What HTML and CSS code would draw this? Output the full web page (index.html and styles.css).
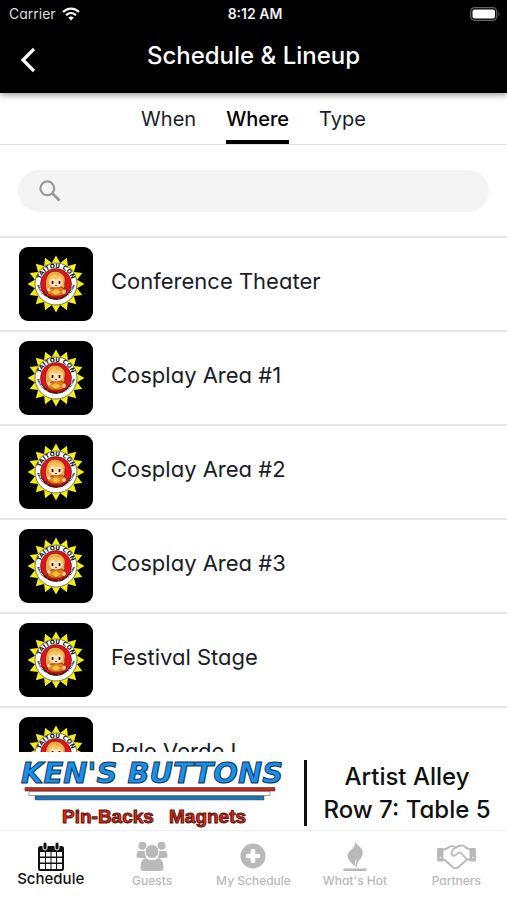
FILE: index.html
```html
<!DOCTYPE html>
<html lang="en">
<head>
    <meta charset="UTF-8">
    <meta name="viewport" content="width=device-width, initial-scale=1.0">
    <title>Schedule &amp; Lineup</title>
    <link rel="stylesheet" href="styles.css">
</head>
<body>
<!-- shared venue logo -->
<svg class="sprite" aria-hidden="true">
    <defs>
        <path id="rays" d="M0 0L28.500 0L21.100 4.200L26.300 10.900L17.900 11.900L20.200 20.200L11.900 17.900L10.900 26.300L4.200 21.100L0 28.500Z"/>
        <path id="arc-top" d="M-16.200 0A16.200 16.200 0 0 1 16.200 0"/>
        <path id="arc-bottom" d="M-19.500 -2A19.600 19.600 0 0 0 19.500 -2"/>
        <symbol id="logo" viewBox="-37 -37 74 74">
            <rect x="-37" y="-37" width="74" height="74" fill="#000"/>
            <g fill="#f5ee12">
                <use href="#rays"/>
                <use href="#rays" transform="rotate(90)"/>
                <use href="#rays" transform="rotate(180)"/>
                <use href="#rays" transform="rotate(270)"/>
            </g>
            <circle r="21" fill="#fff" stroke="#222" stroke-width=".6"/>
            <circle r="15.500" fill="#e8101c" stroke="#222" stroke-width=".6"/>
            <text class="logo-name"><textPath href="#arc-top" startOffset="50%">TAITOU CON</textPath></text>
            <text class="logo-tag"><textPath href="#arc-bottom" startOffset="50%">ARIZONA ANIME CONVENTION</textPath></text>
            <path d="M-9 7C-12 3-11-9-5-12C0-14 7-12 9-6C10-3 8-1 9 3L5 7Z" fill="#eda944" stroke="#5b2509" stroke-width=".7"/>
            <path d="M-5 4L5 3L11 6L9 10L4 12L-4 12L-9 9Z" fill="#e77817" stroke="#5b2509" stroke-width=".7"/>
            <ellipse cx="0" cy="-2" rx="7" ry="5.500" fill="#ffe2bd"/>
            <path d="M-8-3C-6-10 0-11 1-8C4-10 8-7 7-2L3-6L0-4L-3-6Z" fill="#f6c65c"/>
            <path d="M-3.500-3v3M3.500-3v3" stroke="#38180c" stroke-width="1.800"/>
            <path d="M-1 1.500h2" stroke="#b3301d" stroke-width="1"/>
            <path d="M-5 8L0 5L5 8L0 11Z" fill="#f4c23b"/>
            <circle cx="-7" cy="6" r="1.800" fill="#ffe2bd"/>
            <circle cx="8" cy="8" r="1.800" fill="#ffe2bd"/>
        </symbol>
    </defs>
</svg>

<header class="header">
    <div class="status">
        <div class="carrier">
            <span>Carrier</span>
            <svg width="18" height="14" viewBox="0 0 18 14" fill="none" stroke="#fff" stroke-width="2.200">
                <path d="M1 5C5.500.4 12.500.4 17 5"/>
                <path d="M4 8.200C7 5.400 11 5.400 14 8.200"/>
                <path d="M9 13.500L6.200 10.600Q9 8.600 11.800 10.600Z" fill="#fff" stroke="none"/>
            </svg>
        </div>
        <span class="time">8:12 AM</span>
        <svg class="battery" width="31" height="14" viewBox="0 0 31 14">
            <rect x=".7" y=".7" width="26" height="12.600" rx="4" fill="none" stroke="#666" stroke-width="1.200"/>
            <rect x="2.500" y="2.500" width="22.500" height="9" rx="2" fill="#fff"/>
            <path d="M28.500 4.500Q30.500 7 28.500 9.500Z" fill="#666"/>
        </svg>
    </div>
    <div class="title-bar">
        <button class="back" aria-label="Back">
            <svg width="16" height="26" viewBox="0 0 16 26" fill="none" stroke="#fff" stroke-width="3.200">
                <path d="M14 2L3 13L14 24"/>
            </svg>
        </button>
        <h1>Schedule &amp; Lineup</h1>
    </div>
</header>

<nav class="tabs">
    <a href="#when">When</a>
    <a href="#where" class="active">Where</a>
    <a href="#type">Type</a>
</nav>

<main class="content">
    <form class="search">
        <label class="search-box">
            <svg width="22" height="22" viewBox="0 0 22 22" fill="none" stroke="#999" stroke-width="2.200">
                <circle cx="8.300" cy="8.300" r="6.900"/>
                <path d="M13 13L20.500 20.500" stroke-width="2.800"/>
            </svg>
            <input type="search" aria-label="Search">
        </label>
    </form>
    <ul class="places">
        <li><a href="#"><svg class="thumb"><use href="#logo"/></svg><span>Conference Theater</span></a></li>
        <li><a href="#"><svg class="thumb"><use href="#logo"/></svg><span>Cosplay Area #1</span></a></li>
        <li><a href="#"><svg class="thumb"><use href="#logo"/></svg><span>Cosplay Area #2</span></a></li>
        <li><a href="#"><svg class="thumb"><use href="#logo"/></svg><span>Cosplay Area #3</span></a></li>
        <li><a href="#"><svg class="thumb"><use href="#logo"/></svg><span>Festival Stage</span></a></li>
        <li><a href="#"><svg class="thumb"><use href="#logo"/></svg><span>Palo Verde I</span></a></li>
    </ul>
</main>

<a class="banner" href="#">
    <svg class="banner-logo" width="270" height="72" viewBox="0 0 270 72">
        <text class="brand" x="1" y="26">KEN'S BUTTONS</text>
        <path d="M5 30.500H255V34H5Z" fill="#c9271b" stroke="#333" stroke-width=".6"/>
        <path d="M9 34.500H250V38.500H9Z" fill="#fff" stroke="#555" stroke-width=".6"/>
        <path d="M15 39H244V43H15Z" fill="#1976b8" stroke="#333" stroke-width=".4"/>
        <text class="goods" x="42" y="66">Pin-Backs</text>
        <text class="goods" x="149" y="66">Magnets</text>
    </svg>
    <p class="banner-place">Artist Alley<br>Row 7: Table 5</p>
</a>

<nav class="bottom-nav">
    <a href="#" class="active">
        <svg width="28" height="30" viewBox="0 0 28 30">
            <rect x="1" y="5" width="26" height="25" rx="2.500" fill="#111"/>
            <path d="M3 11h5v4.500H3zM9 11h4.500v4.500H9zM14.500 11H19v4.500h-4.500zM20 11h5v4.500h-5zM3 17h5v4.500H3zM9 17h4.500v4.500H9zM14.500 17H19v4.500h-4.500zM20 17h5v4.500h-5zM3 23h5v5H3zM9 23h4.500v5H9zM14.500 23H19v5h-4.500zM20 23h5v5h-5z" fill="#fff"/>
            <rect x="6" y="1" width="4" height="8" rx="2" fill="#111" stroke="#fff"/>
            <rect x="18" y="1" width="4" height="8" rx="2" fill="#111" stroke="#fff"/>
        </svg>
        <span>Schedule</span>
    </a>
    <a href="#">
        <svg width="32" height="30" viewBox="0 0 32 30" fill="#b9b9b9">
            <circle cx="6.500" cy="4.800" r="4"/>
            <circle cx="25.500" cy="4.800" r="4"/>
            <path d="M2 9.500Q5 10.500 9 9.500L10 17H3Q0 17 .5 14ZM30 9.500Q27 10.500 23 9.500L22 17H29Q32 17 31.500 14Z"/>
            <circle cx="16" cy="10.500" r="7" stroke="#fff"/>
            <path d="M9 17Q16 21 23 17Q27.500 19 27.500 27Q27.500 30 24 30H8Q4.500 30 4.500 27Q4.500 19 9 17Z"/>
        </svg>
        <span>Guests</span>
    </a>
    <a href="#">
        <svg width="28" height="30" viewBox="0 0 28 30">
            <circle cx="14" cy="15" r="12.500" fill="#b9b9b9"/>
            <path d="M14 10V20M9 15H19" stroke="#fff" stroke-width="4.500" stroke-linecap="round"/>
        </svg>
        <span>My Schedule</span>
    </a>
    <a href="#">
        <svg width="24" height="30" viewBox="0 0 24 30" fill="#b9b9b9">
            <path d="M12 0Q13 3 17 6Q22 11 17.500 18Q14 21 13.500 26Q4 20 4.500 14Q5 11 9 8Q13 4 12 0Z"/>
            <path d="M12 25Q11 21 14 17.500Q13 22 12 25Z" fill="#fff"/>
            <path d="M.5 27.500h23V30H.5z"/>
        </svg>
        <span>What's Hot</span>
    </a>
    <a href="#">
        <svg width="40" height="30" viewBox="0 0 40 30" fill="none" stroke="#b9b9b9" stroke-width="1.800" stroke-linejoin="round" stroke-linecap="round">
            <path d="M2 8H6.500V19.500H2ZM34.500 8H39V19.500H34.500Z" fill="#b9b9b9"/>
            <path d="M7 8.500Q10 8.500 13 6Q16 4 20 6.500Q24 3.500 28 5Q31 8 34 8.500"/>
            <path d="M7 19H9L16.500 26Q19.500 28.500 22.500 26L31 18.500H34"/>
            <path d="M20 6.500Q15 9 15.500 13Q17.500 17 22 12Q24 10.500 25.500 12.500L31 18.500"/>
            <path d="M4.300 16.500h.2M36.700 16.500h.2" stroke="#fff" stroke-width="1.500"/>
        </svg>
        <span>Partners</span>
    </a>
</nav>
</body>
</html>
```

FILE: styles.css
```css
* {
    box-sizing: border-box;
}
body {
    font-family: Inter, "Liberation Sans", sans-serif;
    /* round, single-storey a */
    font-feature-settings: "cv11";
    background-color: #fff;
    color: #1a1c28;
    margin: 0;
    display: flex;
    flex-direction: column;
    height: 100vh;
}
a {
    color: inherit;
    text-decoration: none;
}
svg {
    display: block;
    flex-shrink: 0;
}
.sprite {
    position: absolute;
    width: 0;
    height: 0;
}
.header {
    background-color: #000;
    color: #fff;
    box-shadow: 0 2px 6px rgba(0,0,0,0.4);
    z-index: 1;
}
.status {
    display: grid;
    grid-template-columns: 1fr auto 1fr;
    align-items: center;
    height: 27px;
    padding: 0 6px 0 9px;
    font-size: 14px;
}
.carrier {
    display: flex;
    align-items: center;
    gap: 6px;
    color: #ddd;
}
.time {
    font-weight: 600;
    color: #eee;
}
.battery {
    justify-self: end;
}
.title-bar {
    display: grid;
    grid-template-columns: 48px 1fr 48px;
    align-items: center;
    height: 66px;
    padding-bottom: 8px;
}
.back {
    background: none;
    border: none;
    padding: 8px 0 0 20px;
    cursor: pointer;
}
.title-bar h1 {
    margin: 0;
    font-size: 24px;
    line-height: 28px;
    font-weight: 500;
    text-align: center;
}
.tabs {
    display: flex;
    justify-content: center;
    gap: 30px;
    height: 52px;
    border-bottom: 1px solid #ddd;
    font-size: 20px;
    line-height: 52px;
}
.tabs a {
    height: 51px;
}
.tabs .active {
    color: #000;
    font-weight: 500;
    border-bottom: 4px solid #000;
}
.content {
    flex: 1;
    min-height: 0;
    overflow-y: auto;
    scrollbar-width: none;
}
.search {
    padding: 25px 18px 24px;
}
.search-box {
    display: flex;
    align-items: center;
    gap: 12px;
    height: 42px;
    padding: 0 21px;
    border-radius: 21px;
    background-color: #f4f4f4;
}
.search-box input {
    flex: 1;
    min-width: 0;
    border: none;
    outline: none;
    background: none;
    font-family: inherit;
    font-size: 20px;
}
.places {
    list-style: none;
    margin: 0;
    padding: 0;
}
.places li {
    border-top: 2px solid #e6e6e6;
}
.places a {
    display: flex;
    align-items: center;
    gap: 18px;
    height: 92px;
    padding: 0 19px;
    font-size: 22px;
}
.places span {
    padding-bottom: 6px;
}
.thumb {
    width: 74px;
    height: 74px;
    border-radius: 9px;
}
.logo-name, .logo-tag {
    font-family: "DejaVu Sans", sans-serif;
    font-weight: bold;
    text-anchor: middle;
    fill: #111;
}
.logo-name {
    font-size: 6px;
}
.logo-tag {
    font-size: 3px;
}
.banner {
    display: flex;
    align-items: center;
    height: 78px;
    padding: 3px 12px 0 20px;
    color: #111;
}
.banner-logo {
    overflow: visible;
}
.brand {
    font: italic bold 29px "DejaVu Sans", sans-serif;
    fill: #1590ee;
    stroke: #17324d;
    stroke-width: 1px;
}
.goods {
    font: bold 19px "Liberation Sans", sans-serif;
    fill: #e32a1b;
    stroke: #5c130c;
    stroke-width: 1px;
}
.banner-place {
    flex: 1;
    margin: 0 0 0 14px;
    padding-left: 12px;
    border-left: 3px solid #111;
    font-size: 24px;
    line-height: 33px;
    font-weight: 500;
    text-align: center;
    white-space: nowrap;
}
.bottom-nav {
    display: grid;
    grid-template-columns: repeat(5, 1fr);
    height: 70px;
    border-top: 1px solid #eee;
    color: #b9b9b9;
    font-size: 12px;
    line-height: 16px;
}
.bottom-nav a {
    display: flex;
    flex-direction: column;
    align-items: center;
    gap: 2px;
    padding-top: 10px;
    font-weight: 500;
}
.bottom-nav .active {
    color: #111;
    font-size: 15px;
    gap: 0;
}
```
